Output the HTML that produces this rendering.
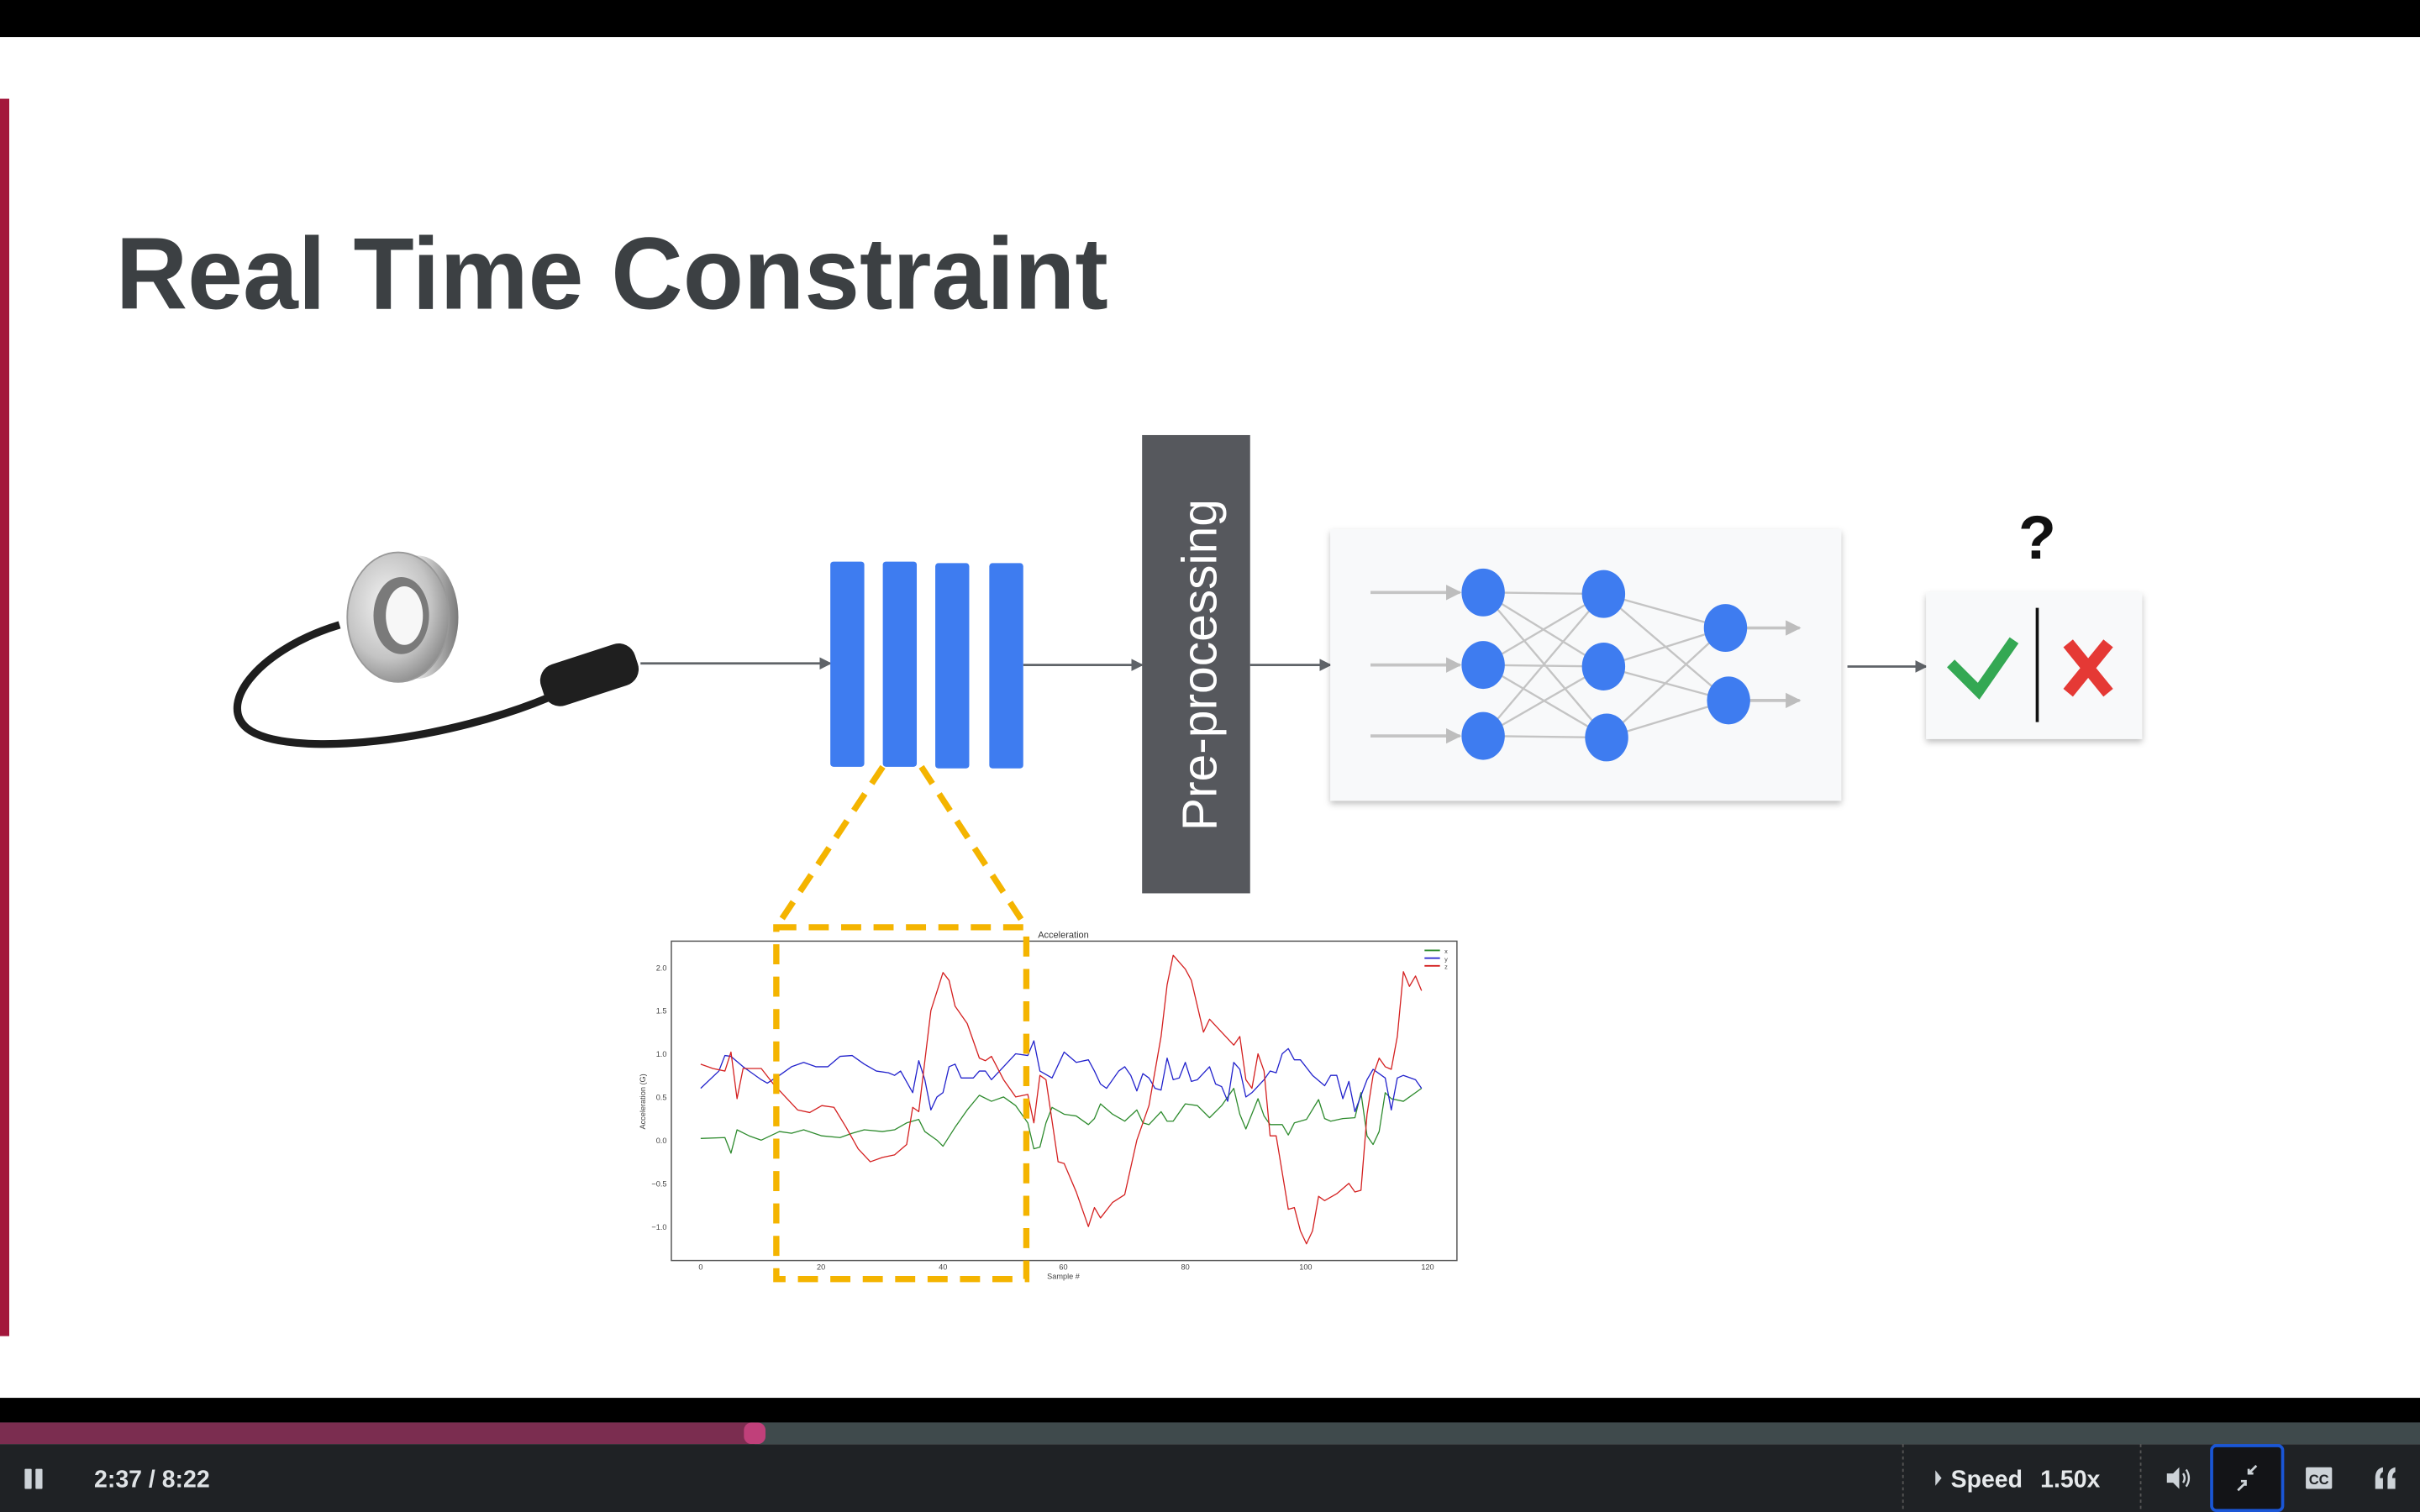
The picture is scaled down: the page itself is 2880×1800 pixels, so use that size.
<!DOCTYPE html>
<html><head><meta charset="utf-8"><style>
html,body{margin:0;padding:0;background:#fff;overflow:hidden}
svg{display:block}
</style></head><body>
<svg width="2880" height="1800" viewBox="0 0 1568 980" xmlns="http://www.w3.org/2000/svg">
<defs>
<marker id="ad" markerWidth="8" markerHeight="8" refX="7" refY="4" orient="auto" markerUnits="userSpaceOnUse"><path d="M0,0 L8,4 L0,8z" fill="#5f6368"/></marker>
<marker id="ag" markerWidth="10" markerHeight="10" refX="9" refY="5" orient="auto" markerUnits="userSpaceOnUse"><path d="M0,0 L10,5 L0,10z" fill="#bdbdbd"/></marker>
<radialGradient id="rg" cx="0.4" cy="0.4" r="0.7"><stop offset="0" stop-color="#f4f4f4"/><stop offset="0.6" stop-color="#c4c4c4"/><stop offset="1" stop-color="#7d7d7d"/></radialGradient>
<linearGradient id="sg" x1="0" x2="1"><stop offset="0" stop-color="#9a9a9a"/><stop offset="0.5" stop-color="#e6e6e6"/><stop offset="1" stop-color="#7a7a7a"/></linearGradient>
<filter id="sh" x="-10%" y="-10%" width="120%" height="130%"><feDropShadow dx="0" dy="2" stdDeviation="2" flood-color="#000" flood-opacity="0.25"/></filter>
</defs>
<rect x="0" y="0" width="1568" height="980" fill="#fff"/>
<rect x="0" y="0" width="1568" height="24" fill="#000"/>
<rect x="0" y="64" width="6" height="802" fill="#a3173c"/>
<text x="75" y="200" font-family="Liberation Sans, sans-serif" font-weight="bold" font-size="66" fill="#3c4043" textLength="643" lengthAdjust="spacingAndGlyphs">Real Time Constraint</text>

<!-- sensor -->
<path d="M220,405 C170,420 140,455 160,472 C185,492 290,482 365,448" fill="none" stroke="#1e1e1e" stroke-width="5"/>
<ellipse cx="270" cy="400" rx="27" ry="40" fill="url(#sg)"/>
<ellipse cx="258" cy="400" rx="33" ry="42" fill="url(#rg)" stroke="#999" stroke-width="1"/>
<ellipse cx="260" cy="399" rx="18" ry="25" fill="#7a7a7a"/>
<ellipse cx="262" cy="399" rx="12" ry="19" fill="#f7f7f7"/>
<g transform="rotate(-18 380 438)"><rect x="350" y="424" width="64" height="28" rx="11" fill="#1f1f1f"/></g>

<!-- arrows -->
<line x1="415" y1="430" x2="538" y2="430" stroke="#5f6368" stroke-width="1.5" marker-end="url(#ad)"/>
<line x1="663" y1="431" x2="740" y2="431" stroke="#5f6368" stroke-width="1.5" marker-end="url(#ad)"/>
<line x1="810" y1="431" x2="862" y2="431" stroke="#5f6368" stroke-width="1.5" marker-end="url(#ad)"/>
<line x1="1197" y1="432" x2="1248" y2="432" stroke="#5f6368" stroke-width="1.5" marker-end="url(#ad)"/>

<!-- blue bars -->
<rect x="538" y="364" width="22" height="133" rx="2" fill="#3e7cf0"/>
<rect x="572" y="364" width="22" height="133" rx="2" fill="#3e7cf0"/>
<rect x="606" y="365" width="22" height="133" rx="2" fill="#3e7cf0"/>
<rect x="641" y="365" width="22" height="133" rx="2" fill="#3e7cf0"/>

<!-- preprocessing -->
<rect x="740" y="282" width="70" height="297" fill="#56585d"/>
<text transform="translate(788,431) rotate(-90)" text-anchor="middle" font-family="Liberation Sans, sans-serif" font-size="32" fill="#fff">Pre-processing</text>

<!-- NN panel -->
<rect x="862" y="343" width="331" height="176" fill="#f8f9fa" filter="url(#sh)"/>
<g stroke="#c4c4c4" stroke-width="1.3" fill="none">
<line x1="888" y1="384" x2="946" y2="384" marker-end="url(#ag)" stroke-width="2"/>
<line x1="888" y1="431" x2="946" y2="431" marker-end="url(#ag)" stroke-width="2"/>
<line x1="888" y1="477" x2="946" y2="477" marker-end="url(#ag)" stroke-width="2"/>
<path d="M961,384L1039,385M961,384L1039,432M961,384L1041,478M961,431L1039,385M961,431L1039,432M961,431L1041,478M961,477L1039,385M961,477L1039,432M961,477L1041,478"/>
<path d="M1039,385L1118,407M1039,385L1120,454M1039,432L1118,407M1039,432L1120,454M1041,478L1118,407M1041,478L1120,454"/>
<line x1="1130" y1="407" x2="1166" y2="407" marker-end="url(#ag)" stroke-width="2"/>
<line x1="1132" y1="454" x2="1166" y2="454" marker-end="url(#ag)" stroke-width="2"/>
</g>
<g fill="#3e7cf0">
<ellipse cx="961" cy="384" rx="14" ry="15.5"/><ellipse cx="961" cy="431" rx="14" ry="15.5"/><ellipse cx="961" cy="477" rx="14" ry="15.5"/>
<ellipse cx="1039" cy="385" rx="14" ry="15.5"/><ellipse cx="1039" cy="432" rx="14" ry="15.5"/><ellipse cx="1041" cy="478" rx="14" ry="15.5"/>
<ellipse cx="1118" cy="407" rx="14" ry="15.5"/><ellipse cx="1120" cy="454" rx="14" ry="15.5"/>
</g>

<!-- output -->
<text x="1320" y="362" text-anchor="middle" font-family="Liberation Sans, sans-serif" font-weight="bold" font-size="40" fill="#111">?</text>
<rect x="1248" y="384" width="140" height="95" fill="#f8f9fa" filter="url(#sh)"/>
<line x1="1320" y1="394" x2="1320" y2="468" stroke="#111" stroke-width="2"/>
<path d="M1264,430 L1282,448 L1305,415" fill="none" stroke="#34a853" stroke-width="7"/>
<path d="M1340,417 L1366,449 M1366,417 L1340,449" fill="none" stroke="#e53935" stroke-width="8"/>

<!-- chart -->
<rect x="435" y="610" width="509" height="207" fill="#fff" stroke="#555" stroke-width="0.8"/>
<text x="689" y="608" text-anchor="middle" font-family="Liberation Sans, sans-serif" font-size="6" fill="#333">Acceleration</text>
<g font-family="Liberation Sans, sans-serif" font-size="5" fill="#444" text-anchor="end">
<text x="432" y="629">2.0</text><text x="432" y="657">1.5</text><text x="432" y="685">1.0</text><text x="432" y="713">0.5</text><text x="432" y="741">0.0</text><text x="432" y="769">−0.5</text><text x="432" y="797">−1.0</text>
</g>
<g font-family="Liberation Sans, sans-serif" font-size="5" fill="#444" text-anchor="middle">
<text x="454" y="823">0</text><text x="532" y="823">20</text><text x="611" y="823">40</text><text x="689" y="823">60</text><text x="768" y="823">80</text><text x="846" y="823">100</text><text x="925" y="823">120</text>
<text x="689" y="829">Sample #</text>
</g>
<text transform="translate(418,714) rotate(-90)" text-anchor="middle" font-family="Liberation Sans, sans-serif" font-size="5" fill="#444">Acceleration (G)</text>
<g transform="translate(454,739) scale(3.925,-56)" fill="none" stroke-width="1.3" stroke-linejoin="round">
<path vector-effect="non-scaling-stroke" stroke="#2e8b2e" d="M0,0.02 L4,0.03 L5,-0.15 L6,0.12 L8,0.05 L10,0 L13,0.1 L15,0.08 L17,0.12 L20,0.05 L23,0.03 L25,0.08 L27,0.12 L30,0.1 L32,0.12 L34,0.2 L36,0.24 L37,0.1 L39,0 L40,-0.07 L42,0.15 L44,0.35 L46,0.52 L48,0.45 L50,0.5 L52,0.4 L54,0.2 L55,-0.1 L56,-0.08 L57,0.2 L58,0.38 L60,0.3 L62,0.28 L64,0.18 L65,0.25 L66,0.42 L68,0.3 L70,0.22 L72,0.35 L73,0.2 L74,0.18 L76,0.33 L77,0.22 L78,0.22 L80,0.42 L82,0.4 L84,0.26 L86,0.4 L88,0.6 L89,0.3 L90,0.13 L92,0.48 L93,0.28 L94,0.18 L96,0.18 L97,0.06 L98,0.2 L100,0.24 L102,0.47 L103,0.25 L104,0.22 L106,0.25 L108,0.26 L109,0.55 L110,0.05 L111,-0.05 L112,0.1 L113,0.55 L114,0.48 L116,0.45 L117,0.5 L119,0.6"/>
<path vector-effect="non-scaling-stroke" stroke="#2222cc" d="M0,0.6 L3,0.8 L4,0.98 L5,0.97 L7,0.85 L10,0.7 L11,0.66 L13,0.75 L15,0.85 L17,0.9 L19,0.85 L21,0.85 L23,0.97 L25,0.98 L27,0.88 L29,0.8 L31,0.78 L32,0.75 L33,0.8 L35,0.55 L36,0.92 L37,0.7 L38,0.35 L39,0.5 L40,0.55 L41,0.85 L42,0.88 L43,0.72 L45,0.72 L46,0.8 L47,0.8 L48,0.7 L50,0.85 L52,1.0 L54,0.98 L55,1.15 L56,0.8 L58,0.72 L60,1.02 L62,0.9 L64,0.93 L65,0.8 L66,0.65 L67,0.6 L69,0.8 L70,0.85 L71,0.75 L72,0.57 L73,0.77 L74,0.72 L75,0.6 L76,0.58 L77,0.95 L78,0.7 L79,0.72 L80,0.9 L81,0.68 L82,0.7 L84,0.85 L85,0.65 L86,0.62 L87,0.45 L88,0.9 L89,0.82 L90,0.5 L91,0.55 L93,0.7 L94,0.8 L95,0.78 L96,1.0 L97,1.06 L98,0.93 L99,0.93 L101,0.75 L103,0.63 L104,0.75 L105,0.75 L106,0.48 L107,0.68 L108,0.33 L110,0.7 L111,0.82 L113,0.72 L114,0.35 L115,0.72 L116,0.75 L118,0.7 L119,0.6"/>
<path vector-effect="non-scaling-stroke" stroke="#d42020" d="M0,0.88 L2,0.83 L4,0.8 L5,1.02 L6,0.48 L7,0.83 L10,0.83 L12,0.65 L14,0.5 L16,0.35 L18,0.32 L20,0.4 L22,0.38 L24,0.15 L26,-0.1 L28,-0.25 L30,-0.2 L32,-0.17 L34,-0.05 L35,0.38 L36,0.33 L38,1.5 L40,1.94 L41,1.85 L42,1.55 L44,1.35 L46,0.95 L47,0.92 L48,0.97 L50,0.7 L52,0.5 L54,0.53 L55,0.2 L56,0.75 L57,0.7 L59,-0.25 L60,-0.27 L62,-0.6 L64,-1.0 L65,-0.78 L66,-0.9 L68,-0.72 L70,-0.63 L72,0 L74,0.4 L76,1.2 L77,1.8 L78,2.14 L80,1.98 L81,1.85 L83,1.25 L84,1.4 L86,1.25 L88,1.1 L89,1.2 L90,0.7 L91,0.6 L92,1.0 L93,0.8 L94,0.05 L95,0.05 L97,-0.8 L98,-0.78 L99,-1.05 L100,-1.2 L101,-1.05 L102,-0.65 L103,-0.7 L105,-0.62 L107,-0.5 L108,-0.6 L109,-0.58 L110,0.3 L111,0.75 L112,0.95 L113,0.85 L114,0.82 L115,1.2 L116,1.95 L117,1.78 L118,1.9 L119,1.73"/>
</g>
<g stroke-width="1"><line x1="923" y1="616" x2="933" y2="616" stroke="#2e8b2e"/><line x1="923" y1="621" x2="933" y2="621" stroke="#2222cc"/><line x1="923" y1="626" x2="933" y2="626" stroke="#d42020"/></g>
<g font-family="Liberation Sans, sans-serif" font-size="4" fill="#444"><text x="936" y="618">x</text><text x="936" y="623">y</text><text x="936" y="628">z</text></g>

<!-- yellow dashed zoom -->
<g fill="none" stroke="#f4b400" stroke-width="4" stroke-dasharray="13,8">
<path d="M572,497 L503,601"/><path d="M597,497 L665,601"/>
<rect x="503" y="601" width="162" height="228"/>
</g>

<!-- player -->
<rect x="0" y="906" width="1568" height="16" fill="#000"/>
<rect x="0" y="922" width="1568" height="14" fill="#3f4a4c"/>
<rect x="0" y="922" width="489" height="14" fill="#7b2d50"/>
<rect x="482" y="922" width="14" height="14" rx="5" fill="#c0407a"/>
<rect x="0" y="936" width="1568" height="44" fill="#1f2225"/>
<rect x="16" y="952" width="4.5" height="13" rx="0.5" fill="#cdd3d8"/><rect x="23" y="952" width="4.5" height="13" rx="0.5" fill="#cdd3d8"/>
<text x="61" y="964" font-family="Liberation Sans, sans-serif" font-weight="bold" font-size="15.5" fill="#dfe3e6">2:37 / 8:22</text>
<line x1="1233" y1="936" x2="1233" y2="980" stroke="#555" stroke-dasharray="2,2"/>
<line x1="1387" y1="936" x2="1387" y2="980" stroke="#555" stroke-dasharray="2,2"/>
<path d="M1254,953 L1258,958 L1254,963z" fill="#cdd3d8"/>
<text x="1264" y="964" font-family="Liberation Sans, sans-serif" font-weight="bold" font-size="15.5" fill="#e6e9eb">Speed</text>
<text x="1322" y="964" font-family="Liberation Sans, sans-serif" font-weight="bold" font-size="15.5" fill="#e6e9eb">1.50x</text>
<path d="M1404,955 L1408,955 L1412,951 L1412,965 L1408,961 L1404,961z" fill="#cdd3d8"/>
<path d="M1414.5,955 Q1416.5,958 1414.5,961 M1416.5,952.5 Q1420,958 1416.5,963.5" stroke="#cdd3d8" stroke-width="1.3" fill="none"/>
<rect x="1433" y="937" width="46" height="42" rx="3" fill="#131417" stroke="#1a56d6" stroke-width="2"/>
<path d="M1450,966 L1455,961 M1452,960 L1455,960 L1455,963 M1462,950 L1457,955 M1457,952 L1457,955 L1460,955" stroke="#cdd3d8" stroke-width="1.5" fill="none"/>
<rect x="1494" y="951" width="17" height="14" rx="1" fill="#cdd3d8"/>
<text x="1502.5" y="962" text-anchor="middle" font-family="Liberation Sans, sans-serif" font-weight="bold" font-size="9" fill="#1f2225">CC</text>
<g fill="#cdd3d8">
<path d="M1539,965 L1539,958 Q1539,952 1544,951 L1544,954 Q1542,955 1542,958 L1544,958 L1544,965z"/>
<path d="M1547,965 L1547,958 Q1547,952 1552,951 L1552,954 Q1550,955 1550,958 L1552,958 L1552,965z"/>
</g>
</svg>
</body></html>
